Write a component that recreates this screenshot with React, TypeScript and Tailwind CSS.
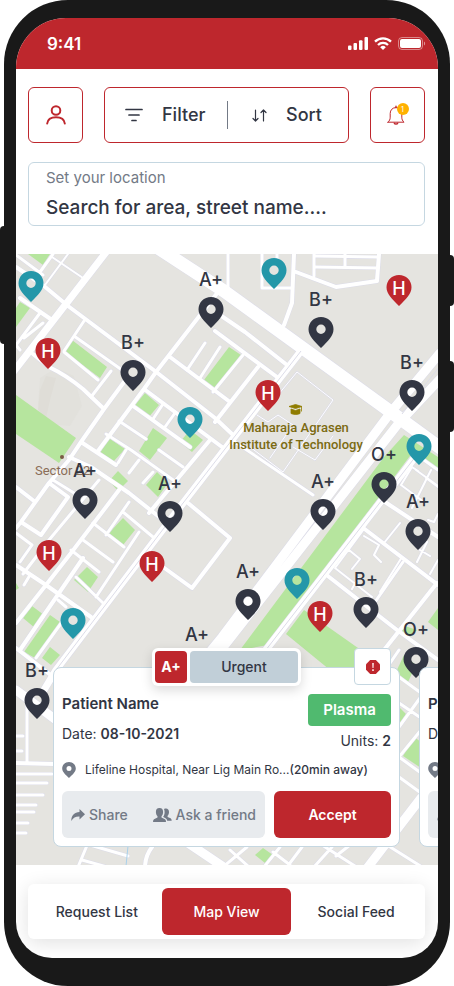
import type { ReactNode } from "react";

type PinKind = "donor" | "hospital" | "camp";

type MapPin = {
  kind: PinKind;
  x: number;
  y: number;
  label?: string;
};

/* Pin positions on the map canvas: x is the pin's centre, y its top edge. */
const pins: MapPin[] = [
  { kind: "camp", x: 15, y: 17 },
  { kind: "camp", x: 258, y: 4 },
  { kind: "camp", x: 174, y: 153 },
  { kind: "camp", x: 403, y: 180 },
  { kind: "camp", x: 281, y: 314 },
  { kind: "camp", x: 57, y: 354 },
  { kind: "hospital", x: 32, y: 84 },
  { kind: "hospital", x: 383, y: 21 },
  { kind: "hospital", x: 252, y: 126 },
  { kind: "hospital", x: 33, y: 286 },
  { kind: "hospital", x: 136, y: 297 },
  { kind: "hospital", x: 304, y: 347 },
  { kind: "donor", x: 195, y: 43, label: "A+" },
  { kind: "donor", x: 117, y: 106, label: "B+" },
  { kind: "donor", x: 305, y: 63, label: "B+" },
  { kind: "donor", x: 396, y: 126, label: "B+" },
  { kind: "donor", x: 69, y: 234, label: "A+" },
  { kind: "donor", x: 154, y: 247, label: "A+" },
  { kind: "donor", x: 307, y: 245, label: "A+" },
  { kind: "donor", x: 368, y: 218, label: "O+" },
  { kind: "donor", x: 402, y: 265, label: "A+" },
  { kind: "donor", x: 232, y: 335, label: "A+" },
  { kind: "donor", x: 181, y: 398, label: "A+" },
  { kind: "donor", x: 350, y: 343, label: "B+" },
  { kind: "donor", x: 400, y: 393, label: "O+" },
  { kind: "donor", x: 21, y: 434, label: "B+" },
];

const pinColor: Record<PinKind, string> = {
  donor: "#323643",
  hospital: "#be272d",
  camp: "#2497a9",
};

const parks = [
  "28,254 50,254 43,265",
  "20,302 30,308 16,327 16,308",
  "72,340 107,367 100,378 65,352",
  "16,395 76,438 59,463 16,434",
  "145,393 159,405 148,418 135,405",
  "153,428 167,438 150,460 139,451",
  "109,438 125,449 113,462 100,453",
  "190,430 203,440 192,452 180,442",
  "229,347 241,355 215,389 204,380",
  "118,471 128,481 118,491 109,481",
  "157,472 168,483 158,497 146,485",
  "123,518 135,530 123,545 109,533",
  "87,567 98,577 88,592 74,580",
  "32,606 44,615 35,628 23,618",
  "50,615 60,622 35,658 24,652",
  "50,647 60,655 51,665 42,658",
  "179,440 196,440 190,450",
  "16,583 19,588 16,590",
  "404,435 438,457 438,470 413,452 268,645 240,650 384,457",
  "304,610 368,655 384,670 330,670 286,634",
  "438,608 428,622 438,630",
  "402,625 399,632 409,638 417,630",
  "404,655 416,665 408,682 396,672",
  "400,708 406,714 400,723",
  "414,737 421,742 421,768 403,756",
  "263,848 273,855 265,863 255,855",
];

const roads: { width: number; d: string }[] = [
  {
    width: 1,
    d: "M278 395L297 372L333 400L283 472L250 447M257 415L268 422L278 415L293 425L270 458M333 436L315 460L293 447",
  },
  {
    width: 2,
    d: "M68 254L45 285M52 257L83 278M401 485L424 502M412 467L401 485M412 467L418 471M431 470L412 508M426 478L438 487M428 520L434 522L438 514M400 523L384 543M427 542L417 562M438 560L430 574M364 529L335 568L372 597M364 529L402 557L380 592M364 536L379 545L374 555L381 562M349 550L360 559L352 569M358 578L352 589M420 550L430 556M416 470L438 486",
  },
  {
    width: 3,
    d: "M16 255L43 275M53 254L40 272M40 313L16 345M43 323L24 338M16 345L20 350M205 343L187 370M220 347L200 378M243 355L213 392M163 404L153 419M175 413L165 427M64 352L98 380M74 336L122 370M111 371L91 397M84 321L64 351M228 254V288M262 254V288H292M277 254V262M314 254V276M316 267L378 268M345 254V267M316 256L378 257M232 440L313 495M119 421L146 439M16 533L32 545L20 562M99 480L49 540L23 574M129 502L106 535M93 523L124 547M83 540L113 562M71 550L99 572M123 512L153 537M76 577L103 603M58 600L66 607M53 480L74 493M30 575L24 585M126 450L118 463M139 460L129 473M159 450L183 467M153 472L143 483M139 532L96 597M106 434L131 450L176 482M43 617L20 650M62 622L36 658M403 562L375 602M417 455L438 470M27 705V763M399 677L421 693M399 703L421 718M420 698L399 727M421 730L399 757L421 773M399 777L421 793M88 843L78 867M90 845L128 856M82 860L107 867M247 847L223 867M230 850L249 867M280 847L264 867M302 847L287 867M273 852L290 865M332 847L314 867M322 845L358 868M350 845L336 856M387 845L422 867M399 650L384 672M16 736H23M16 751H22M16 774H52M16 783H47M16 795H43M16 805H36M16 812H34M16 823H28M16 833H26",
  },
  {
    width: 4,
    d: "M16 267L44 286L68 306L155 371L215 418L232 434M170 357L230 402M144 389L222 447M133 406L190 447M20 298L52 320M33 354L49 367Q66 375 83 389L104 409M124 382L104 409L81 442L69 460L49 483L21 522L16 528M218 292L156 372L144 389L98 451M81 442L116 465M69 457L91 467L129 493L163 520M294 254L292 303L284 325M296 272L336 287L377 281L379 254M220 315L245 332L287 365M215 331L277 377M258 367L215 422M210 440L149 513M188 503L230 538L192 588L163 567M362 527L438 585M324 573L397 630L438 660M437 583L384 650M382 500L438 537M16 487L34 501M49 483L68 497L41 535L21 522M16 565L46 585L91 617M119 490L71 553L46 585L16 623M83 558L59 593L20 650M16 648L52 676M16 763L54 764M152 847Q145 856 145 868",
  },
  { width: 7, d: "M107 251L14 371M301 351L180 507L56 670L44 690M416 456L262 655" },
  {
    width: 9,
    d: "M440 353L391 412L222 637L190 676M440 379L398 424L221 650M16 690L56 720M421 798L368 867M188 843L234 874",
  },
  { width: 13, d: "M155 246L224 291L391 412L446 452" },
];

function CityMap() {
  return (
    <svg
      aria-hidden="true"
      className="block h-full w-full bg-[#e5e4e0]"
      viewBox="16 254 422 611"
      preserveAspectRatio="xMinYMin slice"
      fill="none"
    >
      <path d="M40 378l16-10 18 8 8 30-12 20-24-2-8-20z" fill="#e2e1dc" />
      <path d="M46 376l10 2-6 22-4 18-8-8 2-20z" fill="#dfddd7" />
      {parks.map((points) => (
        <polygon key={points} points={points} fill="#b6e59e" />
      ))}
      {roads.map((road) => (
        <path key={road.width} d={road.d} stroke="#dcdce8" strokeWidth={road.width + 1} strokeLinecap="round" strokeLinejoin="round" />
      ))}
      {roads.map((road) => (
        <path key={road.width} d={road.d} stroke="#ffffff" strokeWidth={road.width} strokeLinecap="round" strokeLinejoin="round" />
      ))}
      <path d="M301 351L180 507L56 670M416 456L262 655M440 366L402 414" stroke="#dcdce8" />
      <path d="M128 846L126 866" stroke="#a9d0ea" />
      <circle cx="62" cy="457" r="2" fill="#7a5c45" />
      <path
        d="M289 406.500l6.500-2 6.500 2-6.500 2zM291 409v4.500c3 1.300 6.500 1.300 9 0v-4.500l-4.500 1.500zM301.500 407v4.500"
        fill="#8f7c00"
        stroke="#8f7c00"
        strokeWidth="0.8"
      />
    </svg>
  );
}

function Pin({ pin }: { pin: MapPin }) {
  return (
    <div className="absolute -translate-x-1/2" style={{ left: pin.x, top: pin.y }}>
      {pin.label && (
        <span className="absolute -top-[29px] left-1/2 -translate-x-1/2 text-lg leading-6 font-medium text-[#323643]">
          {pin.label}
        </span>
      )}
      <svg width="26" height="31" viewBox="0 0 26 31" className="block" aria-hidden="true">
        <path
          fillRule="evenodd"
          fill={pinColor[pin.kind]}
          d={
            pin.kind === "hospital"
              ? "M13 0C20 0 25.500 5.300 25.500 12.300C25.500 19 20 24 13 31C6 24 .5 19 .5 12.300C.5 5.300 6 0 13 0Z"
              : "M13 0C20 0 25.500 5.300 25.500 12.300C25.500 19 20 24 13 31C6 24 .5 19 .5 12.300C.5 5.300 6 0 13 0ZM13 7.600A4.700 4.700 0 1 0 13 17A4.700 4.700 0 1 0 13 7.600Z"
          }
        />
      </svg>
      {pin.kind === "hospital" && (
        <span className="absolute inset-x-0 top-0 text-center text-lg leading-7 font-medium text-white">H</span>
      )}
    </div>
  );
}

function StatusBar() {
  return (
    <div className="flex h-[51px] items-center justify-between bg-[#be272d] pr-3 pl-[31px] text-white">
      <span className="text-[17px] leading-6 font-semibold">9:41</span>
      <div className="flex items-center gap-[6px]">
        <svg width="20" height="13" viewBox="0 0 20 13" fill="currentColor" aria-hidden="true">
          <rect x="0" y="8.500" width="3.500" height="4.500" rx="1" />
          <rect x="5.500" y="6" width="3.500" height="7" rx="1" />
          <rect x="11" y="3.200" width="3.500" height="9.800" rx="1" />
          <rect x="16.500" y="0" width="3.500" height="13" rx="1" />
        </svg>
        <svg width="18" height="13" viewBox="0 0 18 13" fill="none" stroke="currentColor" strokeWidth="2.300" aria-hidden="true">
          <path d="M1 4.600a11.500 11.500 0 0 1 16 0" />
          <path d="M4 8a7 7 0 0 1 10 0" />
          <path d="M9 13L6.200 10.200a4 4 0 0 1 5.600 0z" fill="currentColor" stroke="none" />
        </svg>
        <svg width="28" height="13" viewBox="0 0 28 13" fill="none" aria-hidden="true">
          <rect x="0.500" y="0.500" width="24" height="12" rx="3.500" stroke="currentColor" opacity="0.45" />
          <rect x="2" y="2" width="21" height="9" rx="2" fill="currentColor" />
          <path d="M26 4.500v4c1.500-.6 1.500-3.400 0-4z" fill="currentColor" opacity="0.5" />
        </svg>
      </div>
    </div>
  );
}

function Toolbar() {
  return (
    <div className="flex items-center gap-[21px]">
      <button
        type="button"
        aria-label="Profile"
        className="flex h-14 w-[55px] items-center justify-center rounded-md border border-[#be272d] text-[#be272d]"
      >
        <svg width="20" height="20" viewBox="0 0 20 20" fill="none" stroke="currentColor" strokeWidth="2" strokeLinecap="round" aria-hidden="true">
          <circle cx="10" cy="5.500" r="4.300" />
          <path d="M1.200 18.500c.5-4 4-6.300 8.800-6.300s8.300 2.300 8.800 6.300" />
        </svg>
      </button>
      <div className="flex h-14 flex-1 items-center rounded-md border border-[#be272d] text-lg leading-7 font-medium text-[#323643]">
        <button type="button" className="flex flex-1 items-center gap-[19px] pl-5">
          <svg width="18" height="14" viewBox="0 0 18 14" stroke="currentColor" strokeWidth="1.700" strokeLinecap="round" aria-hidden="true">
            <path d="M1 1.500h16M4 7h10M7 12.500h4" />
          </svg>
          Filter
        </button>
        <span className="h-7 w-px bg-[#737a86]" />
        <button type="button" className="flex w-[120px] items-center gap-[19px] pl-6">
          <svg width="15" height="13" viewBox="0 0 15 13" fill="none" stroke="currentColor" strokeWidth="1.200" strokeLinecap="round" strokeLinejoin="round" aria-hidden="true">
            <path d="M3.500 1v11M1 9.500L3.500 12L6 9.500M11.500 12V1M9 3.500L11.500 1L14 3.500" />
          </svg>
          Sort
        </button>
      </div>
      <button
        type="button"
        aria-label="Notifications, 1 new"
        className="flex h-14 w-[55px] items-center justify-center rounded-md border border-[#be272d] pr-1 text-[#be272d]"
      >
        <span className="relative">
          <svg width="18" height="20" viewBox="0 0 18 20" fill="none" stroke="currentColor" strokeLinecap="round" strokeLinejoin="round" aria-hidden="true">
            <path d="M1 17.200h16c-1.500-1.500-2.200-2.700-2.200-5V8.500C14.800 5 12.500 2.600 9 2.600S3.200 5 3.200 8.500v3.700c0 2.300-.7 3.500-2.200 5z" />
            <path d="M9 2.600V1.300M7.300 18.200c.4 1.100 3 1.100 3.400 0" strokeWidth="1.400" />
          </svg>
          <span className="absolute -top-[2px] -right-1 flex size-3 items-center justify-center rounded-full bg-[#ffb100] text-[7px] leading-none text-white">
            1
          </span>
        </span>
      </button>
    </div>
  );
}

type BloodRequest = {
  id: number;
  name: string;
  date: string;
  units: number;
  component: string;
  group: string;
  place: string;
  distance: string;
};

const requests: BloodRequest[] = [1, 2].map((id) => ({
  id,
  name: "Patient Name",
  date: "08-10-2021",
  units: 2,
  component: "Plasma",
  group: "A+",
  place: "Lifeline Hospital, Near Lig Main Ro...",
  distance: "(20min away)",
}));

function SoftButton({ icon, children }: { icon: ReactNode; children: ReactNode }) {
  return (
    <button type="button" className="flex items-center gap-1 font-medium text-[#737a86]">
      {icon}
      {children}
    </button>
  );
}

function RequestCard({ request }: { request: BloodRequest }) {
  return (
    <article className="relative w-[347px] shrink-0 rounded-lg border border-[#c5d7e1] bg-white px-2 pt-[26px] pb-2 text-sm leading-5 text-[#323643]">
      <div className="absolute -top-5 left-[98px] flex gap-[3px] rounded-md bg-white p-[3px] text-center font-medium shadow-[0_4px_12px_rgba(0,0,0,0.15)]">
        <span className="w-8 rounded bg-[#be272d] leading-8 font-bold text-white">{request.group}</span>
        <span className="w-[108px] rounded bg-[#c1cfd8] leading-8">Urgent</span>
      </div>
      <button
        type="button"
        aria-label="Report request"
        className="absolute -top-5 right-2 flex size-[37px] items-center justify-center rounded border border-[#c5d7e1] bg-white"
      >
        <svg width="14" height="14" viewBox="0 0 14 14" aria-hidden="true">
          <path d="M4.200 0h5.600L14 4.200v5.600L9.800 14H4.200L0 9.800V4.200z" fill="#be272d" />
          <path d="M6.100 3h1.800l-.3 5H6.400zM6.100 9.200h1.800V11H6.100z" fill="#f6d9da" />
        </svg>
      </button>

      <div className="flex justify-between">
        <div className="flex flex-col gap-[10px]">
          <h2 className="text-[15px] leading-5 font-semibold">{request.name}</h2>
          <p>
            Date: <span className="font-semibold">{request.date}</span>
          </p>
        </div>
        <div className="flex flex-col items-end gap-[5px]">
          <span className="w-[83px] rounded bg-[#50ba6f] text-center text-[15px] leading-8 font-semibold text-white">
            {request.component}
          </span>
          <p>
            Units: <span className="font-semibold">{request.units}</span>
          </p>
        </div>
      </div>

      <div className="mt-[9px] flex items-center gap-[9px] text-xs leading-5">
        <svg width="14" height="16" viewBox="0 0 14 16" aria-hidden="true">
          <path
            fillRule="evenodd"
            fill="#737a86"
            d="M7 0C10.900 0 13.800 2.900 13.800 6.500C13.800 10 10.500 12.500 7 16C3.500 12.500 .2 10 .2 6.500C.2 2.900 3.100 0 7 0ZM7 4A2.500 2.500 0 1 0 7 9A2.500 2.500 0 1 0 7 4Z"
          />
        </svg>
        <p className="whitespace-nowrap">
          {request.place}
          <span className="font-medium">{request.distance}</span>
        </p>
      </div>

      <div className="mt-[11px] flex h-[47px] gap-[9px]">
        <div className="flex w-[203px] items-center justify-between rounded-md bg-[#e8ebee] px-[9px]">
          <SoftButton
            icon={
              <svg width="14" height="12" viewBox="0 0 14 12" fill="currentColor" aria-hidden="true">
                <path d="M8.500 0L14 5.200L8.500 10.400V7.500C5 7.300 2.200 8.400.3 12C.2 6.500 3.500 3.300 8.500 3z" />
              </svg>
            }
          >
            Share
          </SoftButton>
          <SoftButton
            icon={
              <svg width="19" height="14" viewBox="0 0 19 14" fill="currentColor" aria-hidden="true">
                <path d="M6.500 0C9 0 10.200 1.600 10.100 4.200C10 6 9.300 7.400 8.500 8.200V9.500L12 11.200Q13 12 13 14H0Q0 12 1 11.200L4.500 9.500V8.200C3.700 7.400 3 6 2.900 4.200C2.800 1.600 4 0 6.500 0Z" />
                <path d="M11 1C13.800-.2 16.100 1 16 4.200C16 5.800 15.300 7 14.600 7.800V9L17.600 10.300Q18.700 11 18.700 12.800H14.200Q14 11 12.500 10.200L10.300 9.100V8.600C11.800 6.500 12 3.500 11 1Z" />
              </svg>
            }
          >
            Ask a friend
          </SoftButton>
        </div>
        <button type="button" className="flex-1 rounded-md bg-[#be272d] font-semibold text-white">
          Accept
        </button>
      </div>
    </article>
  );
}

const tabs = ["Request List", "Map View", "Social Feed"];

export default function App() {
  return (
    <div className="relative w-full bg-white px-1 font-['Inter','Noto_Sans',sans-serif]">
      <span className="absolute top-[226px] left-0 h-[118px] w-2 rounded-l-sm bg-[#191919]" />
      <span className="absolute top-[255px] right-0 h-[51px] w-2 rounded-r-sm bg-[#191919]" />
      <span className="absolute top-[361px] right-0 h-[71px] w-2 rounded-r-sm bg-[#191919]" />

      <div className="relative rounded-[64px] bg-[#191919] px-3 pt-[18px] pb-7">
        <div className="overflow-hidden rounded-t-[50px] rounded-b-[36px] bg-white">
          <StatusBar />

          <header className="flex flex-col gap-[19px] pt-[18px] pr-[13px] pb-7 pl-3">
            <Toolbar />
            <label className="flex h-16 flex-col justify-center gap-1 rounded-md border border-[#c5d7e1] px-[17px]">
              <span className="text-[15px] leading-6 text-[#737a86]">Set your location</span>
              <input
                type="text"
                placeholder="Search for area, street name...."
                className="w-full text-[19px] leading-7 font-medium text-[#323643] outline-none placeholder:text-[#323643]"
              />
            </label>
          </header>

          <main className="relative h-[611px] overflow-hidden">
            <CityMap />
            <p className="absolute top-[165px] left-[280px] -translate-x-1/2 text-center font-['Roboto',sans-serif] text-[13px] leading-[17px] font-medium whitespace-nowrap text-[#7b6a12]">
              Maharaja Agrasen
              <br />
              Institute of Technology
            </p>
            <span className="absolute top-[208px] left-[19px] font-['Roboto',sans-serif] text-[13px] leading-[17px] text-[#8a6d57]">
              Sector 22
            </span>
            {pins.map((pin) => (
              <Pin key={`${pin.x}-${pin.y}`} pin={pin} />
            ))}
            <section aria-label="Nearby requests" className="absolute bottom-[18px] left-[37px] flex gap-[19px]">
              {requests.map((request) => (
                <RequestCard key={request.id} request={request} />
              ))}
            </section>
          </main>

          <div className="py-[19px] pr-[13px] pl-3">
            <nav className="grid grid-cols-3 rounded-md bg-white p-1 shadow-[0_4px_20px_rgba(0,0,0,0.12)]">
              {tabs.map((tab) => (
                <button
                  key={tab}
                  type="button"
                  className={
                    tab === "Map View"
                      ? "h-[47px] rounded-md bg-[#be272d] text-sm font-medium text-white"
                      : "h-[47px] rounded-md text-sm font-medium text-[#323643]"
                  }
                >
                  {tab}
                </button>
              ))}
            </nav>
          </div>
        </div>
      </div>
    </div>
  );
}
